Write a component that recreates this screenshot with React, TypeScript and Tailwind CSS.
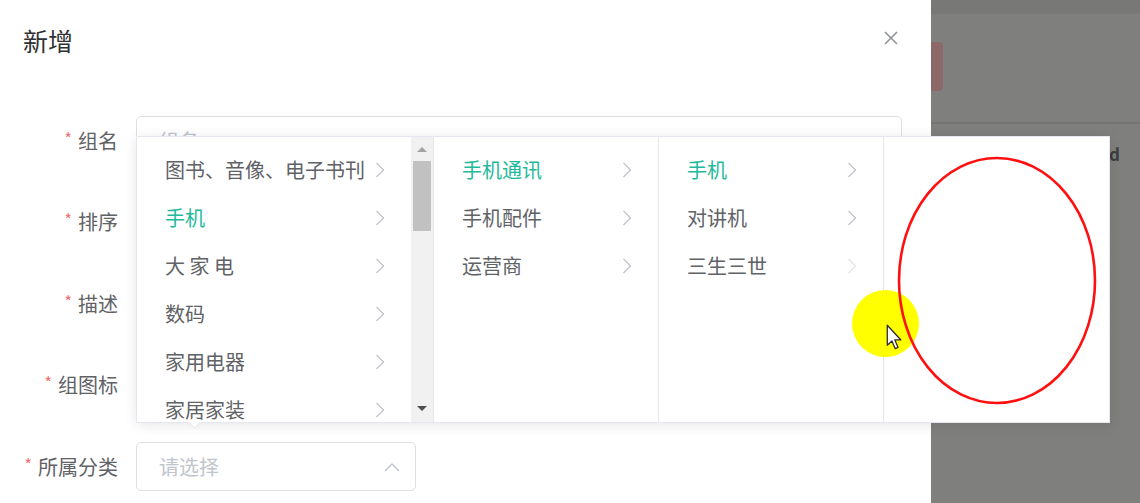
import React from "react"

const FONT = { fontFamily: '"Noto Sans CJK SC", "Noto Sans", sans-serif' }

const fields = ["组名", "排序", "描述", "组图标"]

const level1 = ["图书、音像、电子书刊", "手机", "大 家 电", "数码", "家用电器", "家居家装"]
const level2 = ["手机通讯", "手机配件", "运营商"]
const level3 = ["手机", "对讲机", "三生三世"]

function Chevron({ faint }: { faint?: boolean }) {
  return (
    <svg width="10" height="16" viewBox="0 0 10 16" className="shrink-0">
      <polyline
        points="1.5,1 8.5,8 1.5,15"
        fill="none"
        stroke={faint ? "#e2e4e8" : "#c0c4cc"}
        strokeWidth="1.3"
      />
    </svg>
  )
}

function MenuItem({ label, active, faint }: { label: string; active?: boolean; faint?: boolean }) {
  return (
    <div className="h-[48px] flex items-center justify-between pl-[28px] pr-[26px]">
      <span className={`text-[20px] whitespace-pre ${active ? "text-[#1fb99b]" : "text-[#606266]"}`}>{label}</span>
      <Chevron faint={faint} />
    </div>
  )
}

function FormRow({ label, children }: { label: string; children?: React.ReactNode }) {
  return (
    <div className="flex items-center h-[49px] mb-[32.5px]">
      <div className="w-[118px] text-right text-[20px] text-[#606266] shrink-0">
        <span className="text-[#f56c6c] mr-[6px] text-[16px] align-top">*</span>
        {label}
      </div>
      <div className="ml-[18px] flex-1 h-full">{children}</div>
    </div>
  )
}

export default function App() {
  return (
    <div className="relative w-[1140px] h-[503px] overflow-hidden flex" style={FONT}>
      {/* dialog */}
      <div className="w-[931px] h-full bg-white shrink-0">
        <div className="flex items-start justify-between pl-[23px] pr-[33px] pt-[25px]">
          <h1 className="text-[25px] leading-[30px] text-[#303133]">新增</h1>
          <svg width="14" height="14" viewBox="0 0 14 14" className="mt-[6px]">
            <path d="M1 1 13 13M13 1 1 13" stroke="#909399" strokeWidth="1.6" />
          </svg>
        </div>

        <div className="pt-[61px] pr-[29px]">
          {fields.map((f) => (
            <FormRow key={f} label={f}>
              <div className="h-full border border-[#dcdfe6] rounded-[5px] flex items-center pl-[22px] text-[20px] text-[#c0c4cc]">
                {f}
              </div>
            </FormRow>
          ))}
          <FormRow label="所属分类">
            <div className="w-[280px] h-full border border-[#dcdfe6] rounded-[5px] flex items-center justify-between pl-[22px] pr-[15px]">
              <span className="text-[20px] text-[#c0c4cc]">请选择</span>
              <svg width="16" height="10" viewBox="0 0 16 10">
                <polyline points="1,9 8,2 15,9" fill="none" stroke="#c0c4cc" strokeWidth="1.4" />
              </svg>
            </div>
          </FormRow>
        </div>
      </div>

      {/* page behind the mask */}
      <div className="flex-1 h-full bg-[#7f807e] flex flex-col">
        <div className="h-[14px] bg-[#787977]" />
        <div className="mt-[28px] w-[12px] h-[49px] bg-[#8d6869] rounded-r-[4px]" />
        <div className="mt-[31px] h-[2px] bg-[#747573]" />
        <div className="mt-[20px] pr-[20px] text-right text-[17px] font-bold text-[#3d3d3d] leading-[20px]">d</div>
      </div>

      {/* cascader dropdown */}
      <div className="absolute left-[136px] top-[136px] w-[974px] h-[287px] bg-white border border-[#e4e7ed] shadow-[0_2px_12px_rgba(0,0,0,0.1)] flex">
        <div className="w-[296px] h-full flex shrink-0">
          <div className="flex-1 pt-[9px] overflow-hidden">
            {level1.map((l) => (
              <MenuItem key={l} label={l} active={l === "手机"} />
            ))}
          </div>
          <div className="w-[22px] h-full bg-[#f1f1f1] flex flex-col">
            <div className="h-[24px] flex items-center justify-center">
              <div className="w-0 h-0 border-l-[5px] border-r-[5px] border-b-[5px] border-l-transparent border-r-transparent border-b-[#a3a3a3]" />
            </div>
            <div className="mx-[2px] h-[70px] bg-[#c1c1c1]" />
            <div className="flex-1" />
            <div className="h-[28px] flex items-center justify-center">
              <div className="w-0 h-0 border-l-[5px] border-r-[5px] border-t-[5px] border-l-transparent border-r-transparent border-t-[#505050]" />
            </div>
          </div>
        </div>
        <div className="w-[225px] h-full border-l border-[#e4e7ed] pt-[9px] shrink-0">
          {level2.map((l) => (
            <MenuItem key={l} label={l} active={l === "手机通讯"} />
          ))}
        </div>
        <div className="w-[225px] h-full border-l border-[#e4e7ed] pt-[9px] shrink-0">
          {level3.map((l) => (
            <MenuItem key={l} label={l} active={l === "手机"} faint={l === "三生三世"} />
          ))}
        </div>
        <div className="flex-1 h-full border-l border-[#e4e7ed]" />

        {/* popper arrow */}
        <div className="absolute left-[53px] -bottom-[5px] w-[9px] h-[9px] bg-white border-r border-b border-[#e4e7ed] rotate-45" />
      </div>

      {/* cursor highlight */}
      <div className="absolute left-[852px] top-[290px] w-[67px] h-[67px] rounded-full bg-[#ffff00] blur-[0.6px]" />
      <svg className="absolute left-[886px] top-[324px]" width="18" height="27" viewBox="0 0 14 21">
        <path
          d="M1 1 L1 16.5 L4.6 13.2 L7.2 19.2 L9.4 18.2 L6.9 12.4 L11.6 12.4 Z"
          fill="#ffffff"
          stroke="#2b2b2b"
          strokeWidth="1"
          strokeLinejoin="round"
        />
      </svg>

      {/* red annotation */}
      <svg className="absolute left-[897px] top-[156px]" width="200" height="250" viewBox="0 0 200 250">
        <ellipse cx="100" cy="124.5" rx="98" ry="122.5" fill="none" stroke="#ff1010" strokeWidth="2.6" />
      </svg>
    </div>
  )
}
